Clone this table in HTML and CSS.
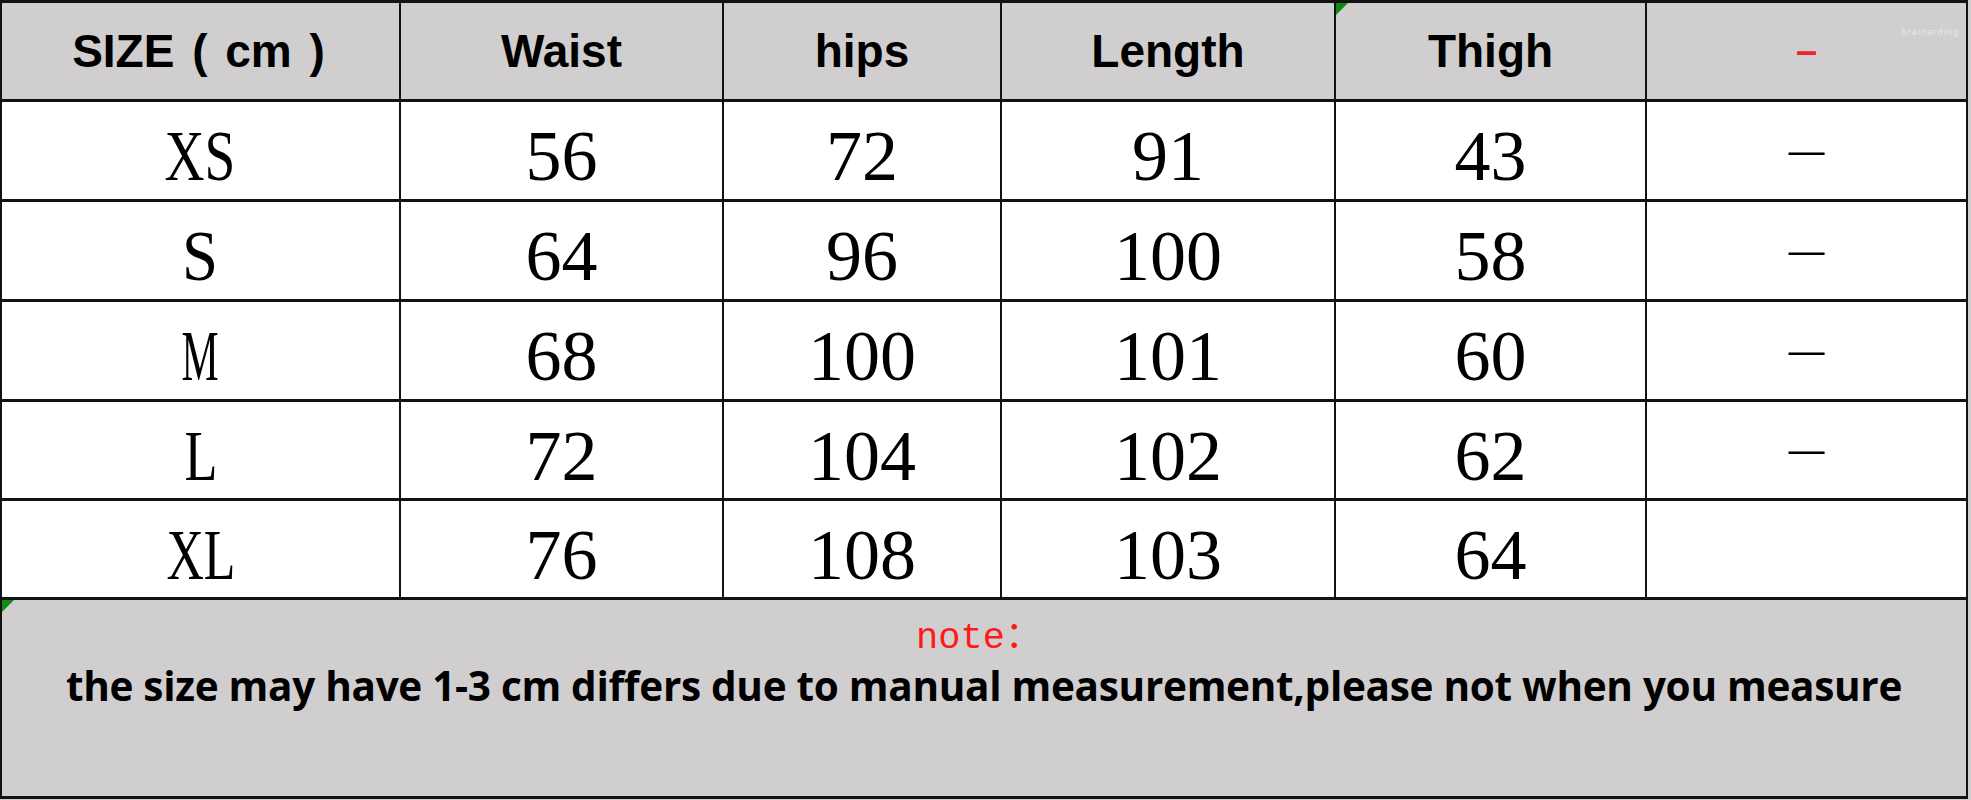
FILE: index.html
```html
<!DOCTYPE html>
<html lang="en">
<head>
<meta charset="utf-8">
<title>Size chart</title>
<link rel="stylesheet" href="styles.css">
</head>
<body>
<div class="sheet">
  <div class="grid">
    <div class="cell head size-head">SIZE ( cm )</div>
    <div class="cell head">Waist</div>
    <div class="cell head">hips</div>
    <div class="cell head">Length</div>
    <div class="cell head flagged"><span class="flag"></span>Thigh</div>
    <div class="cell head"><span class="red-dash">–</span></div>

    <div class="cell data"><span class="lt sx-xs">XS</span></div>
    <div class="cell data">56</div>
    <div class="cell data">72</div>
    <div class="cell data">91</div>
    <div class="cell data">43</div>
    <div class="cell dash"><span class="em">—</span></div>

    <div class="cell data"><span class="lt sx-s">S</span></div>
    <div class="cell data">64</div>
    <div class="cell data">96</div>
    <div class="cell data">100</div>
    <div class="cell data">58</div>
    <div class="cell dash"><span class="em">—</span></div>

    <div class="cell data"><span class="lt sx-m">M</span></div>
    <div class="cell data">68</div>
    <div class="cell data">100</div>
    <div class="cell data">101</div>
    <div class="cell data">60</div>
    <div class="cell dash"><span class="em">—</span></div>

    <div class="cell data"><span class="lt sx-l">L</span></div>
    <div class="cell data">72</div>
    <div class="cell data">104</div>
    <div class="cell data">102</div>
    <div class="cell data">62</div>
    <div class="cell dash"><span class="em">—</span></div>

    <div class="cell data"><span class="lt sx-xl">XL</span></div>
    <div class="cell data">76</div>
    <div class="cell data">108</div>
    <div class="cell data">103</div>
    <div class="cell data">64</div>
    <div class="cell data"></div>

    <div class="cell note flagged">
      <span class="flag"></span>
      <div class="note-title">note：</div>
      <div class="note-text">the size may have 1-3 cm differs due to manual measurement,please not when you measure</div>
    </div>
  </div>
  <span class="mark">brainarding</span>
</div>
</body>
</html>
```

FILE: styles.css
```css
html, body {
  margin: 0;
  padding: 0;
}
body {
  background: #cfcdcd;
  width: 1971px;
  height: 800px;
  overflow: hidden;
}
.sheet {
  position: relative;
  width: 1968px;
  height: 799px;
}
.grid {
  display: grid;
  grid-template-columns: 397px 321px 276px 332px 309px 319px;
  grid-template-rows: 96px 97px 97px 97px 96px 96px 196px;
  column-gap: 2px;
  row-gap: 3px;
  padding: 3px 2px;
  background: #121212;
}
.cell {
  display: flex;
  align-items: center;
  justify-content: center;
  background: #ffffff;
  color: #000;
  overflow: hidden;
}
.head {
  background: #d0cece;
  font-family: "Liberation Sans", Arial, sans-serif;
  font-weight: 700;
  font-size: 46px;
}
.size-head {
  word-spacing: 5px;
  padding-right: 4px;
}
.flagged {
  position: relative;
}
.flag {
  position: absolute;
  left: 0;
  top: 0;
  width: 12px;
  height: 12px;
  background: #0f8a12;
  clip-path: polygon(0 0, 100% 0, 0 100%);
}
.red-dash {
  color: #e8262c;
  font-size: 38px;
}
.data {
  font-family: "Liberation Serif", "Times New Roman", serif;
  font-size: 72px;
  padding-top: 12px;
  box-sizing: border-box;
}
.lt {
  display: inline-block;
}
.sx-xs { transform: scaleX(0.77); }
.sx-s { transform: scaleX(0.9); }
.sx-m { transform: scaleX(0.58); }
.sx-l { transform: scaleX(0.75); }
.sx-xl { transform: scaleX(0.72); }
.dash {
  font-family: "Liberation Sans", Arial, sans-serif;
  font-size: 36px;
}
.note {
  grid-column: 1 / -1;
  background: #d0cece;
  flex-direction: column;
  justify-content: flex-start;
  padding-top: 18px;
  box-sizing: border-box;
}
.note-title {
  font-family: "Liberation Mono", "Noto Sans CJK SC", monospace;
  font-size: 37px;
  line-height: 40px;
  color: #ff1a1a;
  padding-right: 10px;
}
.note-text {
  font-family: "Open Sans", Lato, sans-serif;
  font-weight: 700;
  font-size: 40.5px;
  line-height: 44px;
  margin-top: 6px;
  white-space: nowrap;
  letter-spacing: -0.3px;
}
.mark {
  position: absolute;
  left: 1901px;
  top: 27px;
  font-family: "DejaVu Sans", sans-serif;
  font-size: 9px;
  letter-spacing: 0.6px;
  color: rgba(255, 255, 255, 0.55);
}
```
